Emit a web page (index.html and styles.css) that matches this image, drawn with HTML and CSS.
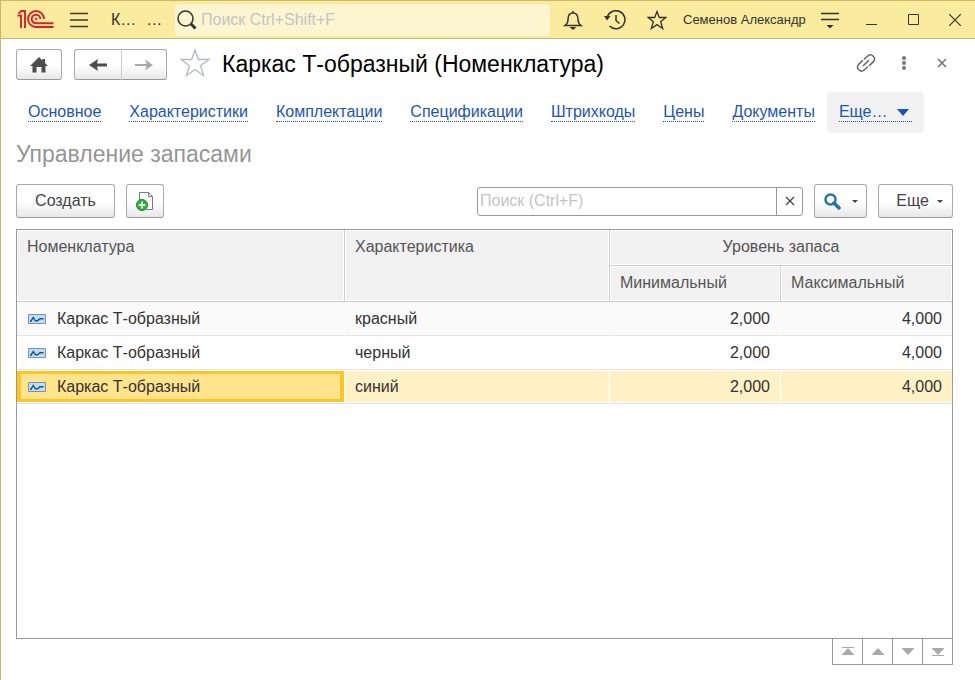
FILE: index.html
```html
<!DOCTYPE html>
<html lang="ru">
<head>
<meta charset="utf-8">
<meta name="viewport" content="width=device-width, initial-scale=1">
<title>Каркас Т-образный (Номенклатура)</title>
<link rel="stylesheet" href="styles.css">
</head>
<body>
<div class="window">
  <header class="titlebar">
    <svg class="logo" width="38" height="20" viewBox="0 0 38 20" fill="none" stroke="#d9202a" stroke-width="1.900" aria-hidden="true">
      <path d="M.5 5.500H4V18M1.500 3.500L4.500 1H8v17"/>
      <path d="M27 9a8 8 0 1 0-8 8h17.500"/>
      <path d="M23.300 9A4.300 4.300 0 1 0 19 13.300h17.500"/>
      <circle cx="19" cy="9" r="1" stroke-width="1"/>
    </svg>
    <button class="tool menu-btn" aria-label="Главное меню">
      <svg width="20" height="18" viewBox="0 0 20 18" fill="none" stroke="#3d3a2b" stroke-width="1.500"><path d="M1 2.500h18M1 9h18M1 15.500h18"/></svg>
    </button>
    <span class="app-name"><span>К…</span><span>…</span></span>
    <label class="global-search">
      <svg width="20" height="20" viewBox="0 0 20 20" fill="none" stroke="#333"><circle cx="8.500" cy="8.500" r="7.500" stroke-width="1.500"/><path d="M14 14l4.500 4.500" stroke-width="3"/></svg>
      <input type="text" placeholder="Поиск Ctrl+Shift+F" aria-label="Поиск">
    </label>
    <button class="tool" aria-label="Уведомления">
      <svg width="20" height="20" viewBox="0 0 20 20" fill="none" stroke="#333" stroke-width="1.500"><path d="M2 15.500c2-1.500 3-3 3-6 0-4 1.500-6.500 5-6.500s5 2.500 5 6.500c0 3 1 4.500 3 6zM10 3V1"/><path d="M6.500 17h7L10 20z" fill="#333" stroke="none"/></svg>
    </button>
    <button class="tool" aria-label="История">
      <svg width="22" height="20" viewBox="0 0 22 20" fill="none" stroke="#333" stroke-width="1.500"><path d="M3 8.500A9 9 0 1 1 5.500 16M12 5v5.500l3.500 3"/><path d="M0 6h6.500L3 10.500z" fill="#333" stroke="none"/></svg>
    </button>
    <button class="tool" aria-label="Избранное">
      <svg width="20" height="20" viewBox="0 0 20 20" fill="none" stroke="#333" stroke-width="1.300"><path d="M10 1.500l2.300 6h6.400l-5 4.200 2 6.800L10 14.600l-5.700 3.900 2-6.800-5-4.200h6.400z"/></svg>
    </button>
    <span class="user">Семенов Александр</span>
    <button class="tool" aria-label="Настройки">
      <svg width="20" height="18" viewBox="0 0 20 18" fill="none" stroke="#333" stroke-width="1.500"><path d="M1 2.500h18M1 8.500h18"/><path d="M6.500 14h7L10 17.500z" fill="#333" stroke="none"/></svg>
    </button>
    <button class="tool" aria-label="Свернуть">
      <svg width="12" height="12" viewBox="0 0 12 12" fill="none" stroke="#333"><path d="M0 10.500h11"/></svg>
    </button>
    <button class="tool" aria-label="Развернуть">
      <svg width="12" height="12" viewBox="0 0 12 12" fill="none" stroke="#333"><path d="M.5.5h10v10H.5z"/></svg>
    </button>
    <button class="tool close-window" aria-label="Закрыть">
      <svg width="12" height="12" viewBox="0 0 12 12" fill="none" stroke="#333" stroke-width="1.200"><path d="M0 0l12 12M12 0L0 12"/></svg>
    </button>
  </header>

  <main class="page">
    <div class="form-head">
      <button class="btn home" aria-label="Начальная страница">
        <svg width="18" height="16" viewBox="0 0 18 16" fill="#4d4d4d"><path d="M9 0l3.500 3.500V2H15v4l3 3h-2.500v6.500h-4V10h-5v5.500h-4V9H0z"/></svg>
      </button>
      <div class="history">
        <button class="btn" aria-label="Назад">
          <svg width="18" height="14" viewBox="0 0 18 14"><path d="M18 5.500v3H8L9 13 0 7l9-6-1 4.500z" fill="#4d4d4d"/></svg>
        </button>
        <button class="btn" aria-label="Вперед">
          <svg width="18" height="14" viewBox="0 0 18 14"><path d="M0 6v2h11.500L10 12.500 18 7l-8-5.500L11.500 6z" fill="#aaa"/></svg>
        </button>
      </div>
      <button class="plain favorite" aria-label="В избранное">
        <svg width="30" height="28" viewBox="0 0 30 28" fill="none" stroke="#b4bac0" stroke-width="1.300"><path d="M15 1l3.400 9.500H29l-8.500 6.200L23.500 26.500 15 20.500 6.500 26.500l3-9.800L1 10.500h10.600z"/></svg>
      </button>
      <h1>Каркас Т-образный (Номенклатура)</h1>
      <button class="plain link-btn" aria-label="Ссылка">
        <svg width="20" height="20" viewBox="-1 -1 20 20" fill="none" stroke="#666" stroke-width="1.500" stroke-linecap="round"><path d="M7.500 5L11 1.800a4 4 0 0 1 5.600 5.600L12.500 11.500M10.500 13L7 16.200a4 4 0 0 1-5.600-5.600L5.500 6.500M6.500 11.500l5-5"/></svg>
      </button>
      <button class="plain" aria-label="Действия">
        <svg width="6" height="14" viewBox="0 0 6 14" fill="#777"><circle cx="3" cy="2" r="2"/><circle cx="3" cy="7" r="2"/><circle cx="3" cy="12" r="2"/></svg>
      </button>
      <button class="plain" aria-label="Закрыть форму">
        <svg width="10" height="10" viewBox="0 0 10 10" fill="none" stroke="#707070" stroke-width="1.500"><path d="M1 1l8 8M9 1L1 9"/></svg>
      </button>
    </div>

    <nav class="links">
      <a href="#">Основное</a>
      <a href="#">Характеристики</a>
      <a href="#">Комплектации</a>
      <a href="#">Спецификации</a>
      <a href="#">Штрихкоды</a>
      <a href="#">Цены</a>
      <a href="#">Документы</a>
      <span class="more-tab"><a href="#">Еще…<svg width="12" height="7" viewBox="0 0 12 7"><path d="M0 0h12L6 7z" fill="#1556b0"/></svg></a></span>
    </nav>

    <h2>Управление запасами</h2>

    <div class="toolbar">
      <button class="btn create">Создать</button>
      <button class="btn copy" aria-label="Создать копированием">
        <svg width="18" height="20" viewBox="0 0 18 20" fill="none"><path d="M3.500 10V1.500h9l4 4v13H10" fill="#fff" stroke="#717b8c"/><path d="M12.500 1.500v4h4" stroke="#717b8c"/><circle cx="6" cy="14" r="5.500" fill="#35ae46" stroke="#188428"/><path d="M6 10.500v7M2.500 14h7" stroke="#fff" stroke-width="1.500"/></svg>
      </button>
      <div class="list-search">
        <input type="text" placeholder="Поиск (Ctrl+F)" aria-label="Поиск в списке">
        <button aria-label="Очистить">
          <svg width="10" height="10" viewBox="0 0 10 10" fill="none" stroke="#444" stroke-width="1.300"><path d="M1 1l8 8M9 1L1 9"/></svg>
        </button>
      </div>
      <button class="btn find" aria-label="Найти">
        <svg width="17" height="17" viewBox="0 0 17 17" fill="none" stroke="#2873a6"><circle cx="6.500" cy="6.500" r="5" stroke-width="2.500"/><path d="M10 10l5 5" stroke-width="3.500" stroke-linecap="round"/></svg>
        <svg width="6" height="3" viewBox="0 0 6 3"><path d="M0 0h6L3 3z" fill="#444"/></svg>
      </button>
      <button class="btn more">Еще
        <svg width="6" height="3" viewBox="0 0 6 3"><path d="M0 0h6L3 3z" fill="#444"/></svg>
      </button>
    </div>

    <div class="list">
      <table>
        <colgroup><col><col class="col-feature"><col class="col-level"><col class="col-level"></colgroup>
        <thead>
          <tr><th rowspan="2">Номенклатура</th><th rowspan="2">Характеристика</th><th colspan="2" class="group">Уровень запаса</th></tr>
          <tr><th>Минимальный</th><th>Максимальный</th></tr>
        </thead>
        <tbody>
          <tr class="odd">
            <td><span class="item"><svg width="18" height="10" viewBox="0 0 18 10" fill="none"><path d="M.5.5h17v9H.5z" fill="#bfdcf3" stroke="#7d93a8"/><path d="M2 7.200h1L5.200 3.500l2.300 3.300h2L12 4.700h3.500" stroke="#17548f" stroke-width="1.400"/></svg>Каркас Т-образный</span></td>
            <td>красный</td><td class="num">2,000</td><td class="num">4,000</td>
          </tr>
          <tr>
            <td><span class="item"><svg width="18" height="10" viewBox="0 0 18 10" fill="none"><path d="M.5.5h17v9H.5z" fill="#bfdcf3" stroke="#7d93a8"/><path d="M2 7.200h1L5.200 3.500l2.300 3.300h2L12 4.700h3.500" stroke="#17548f" stroke-width="1.400"/></svg>Каркас Т-образный</span></td>
            <td>черный</td><td class="num">2,000</td><td class="num">4,000</td>
          </tr>
          <tr class="selected">
            <td class="current"><span class="item"><svg width="18" height="10" viewBox="0 0 18 10" fill="none"><path d="M.5.5h17v9H.5z" fill="#bfdcf3" stroke="#7d93a8"/><path d="M2 7.200h1L5.200 3.500l2.300 3.300h2L12 4.700h3.500" stroke="#17548f" stroke-width="1.400"/></svg>Каркас Т-образный</span></td>
            <td>синий</td><td class="num">2,000</td><td class="num">4,000</td>
          </tr>
        </tbody>
      </table>
    </div>

    <div class="pager">
      <button aria-label="В начало"><svg width="14" height="10" viewBox="0 0 14 10" fill="#aaa"><path d="M1 0h12v1H1zM7 1l6.500 7H.5z"/></svg></button>
      <button aria-label="Вверх"><svg width="14" height="10" viewBox="0 0 14 10" fill="#aaa"><path d="M7 1l6.500 7H.5z"/></svg></button>
      <button aria-label="Вниз"><svg width="14" height="10" viewBox="0 0 14 10" fill="#aaa"><path d="M7 8L.5 1h13z"/></svg></button>
      <button aria-label="В конец"><svg width="14" height="10" viewBox="0 0 14 10" fill="#aaa"><path d="M7 8L.5 1h13zM1 8h12v1H1z"/></svg></button>
    </div>
  </main>
</div>
</body>
</html>
```
FILE: styles.css
```css
* { box-sizing: border-box; }

body {
  margin: 0;
  font: 16px/20px "Liberation Sans", Arial, sans-serif;
  color: #333;
  background: #fff;
}

button, input { font: inherit; color: inherit; }
button { padding: 0; border: 0; background: none; }
svg { display: block; flex: none; }

.window {
  display: flex;
  flex-direction: column;
  min-height: 100vh;
  border: solid #c9b96a;
  border-width: 1px 0 0 1px;
}

/* Title bar */
.titlebar {
  display: flex;
  align-items: center;
  height: 38px;
  padding-left: 16px;
  background: #faeb9e;
  border-bottom: 1px solid #c9b96a;
}

.tool {
  display: flex;
  flex: none;
  align-items: center;
  justify-content: center;
  width: 42px;
  height: 36px;
}

.tool.menu-btn { width: 20px; margin-left: 14px; }
.tool.close-window { width: 40px; }

.app-name {
  display: flex;
  gap: 10px;
  width: 64px;
  margin-left: 22px;
}

.global-search {
  display: flex;
  flex: 1;
  align-items: center;
  gap: 4px;
  min-width: 0;
  height: 32px;
  margin-right: 2px;
  padding-left: 2px;
  background: #fdf5d0;
  border-radius: 3px;
}

input {
  flex: 1;
  min-width: 0;
  padding: 0;
  border: 0;
  outline: 0;
  background: none;
}

input::placeholder { color: #c4c4c4; opacity: 1; }

.user {
  width: 131px;
  padding-left: 5px;
  font-size: 13px;
  white-space: nowrap;
}

/* Form header */
.page {
  display: flex;
  flex: 1;
  flex-direction: column;
  padding: 10px 22px 15px 15px;
}

.form-head { display: flex; align-items: center; height: 31px; }

.btn {
  display: flex;
  align-items: center;
  justify-content: center;
  height: 34px;
  color: #444;
  background: linear-gradient(#fff 50%, #e8e8e8);
  border: 1px solid #aaa;
  border-bottom-color: #999;
  border-radius: 3px;
}

.form-head .btn { height: 31px; }
.home { width: 46px; margin-right: 12px; }
.history { display: flex; }
.history .btn { width: 48px; border-right-color: #ccc; border-radius: 3px 0 0 3px; }
.history .btn + .btn { width: 45px; border-right-color: #aaa; border-left: 0; border-radius: 0 3px 3px 0; }

.plain {
  display: flex;
  flex: none;
  align-items: center;
  justify-content: center;
  width: 38px;
  height: 30px;
  padding-bottom: 3px;
}

.plain:last-child { margin-right: -8px; }
.plain.favorite { width: 30px; margin: 0 12px 0 13px; }

h1, h2 { margin: 0; font-weight: normal; }
h1 { flex: 1; padding-bottom: 2px; color: #000; font-size: 23px; line-height: 28px; }

/* Section links */
.links {
  display: flex;
  align-items: center;
  gap: 28px;
  height: 41px;
  margin-top: 12px;
  padding-left: 12px;
  white-space: nowrap;
}

.links a {
  display: flex;
  align-items: center;
  height: 18px;
  color: #1d55b5;
  text-decoration: none;
  border-bottom: 1px dotted #1d55b5;
}

.more-tab {
  display: flex;
  align-items: center;
  height: 41px;
  margin-left: -16px;
  padding: 0 12px;
  background: #f1f1f1;
  border-radius: 4px;
}

.more-tab a { gap: 10px; padding-right: 3px; }

h2 { margin-top: 7px; color: #959595; font-size: 23px; line-height: 28px; }

/* Command bar */
.toolbar { display: flex; align-items: center; gap: 11px; margin-top: 16px; }
.create { width: 99px; }
.copy { width: 38px; }

.list-search {
  display: flex;
  width: 326px;
  height: 29px;
  margin-left: auto;
  border: 1px solid #999;
  border-radius: 3px;
}

.list-search input { padding-left: 2px; }

.list-search button {
  display: flex;
  align-items: center;
  justify-content: center;
  width: 26px;
  border-left: 1px solid #999;
}

.find { gap: 11px; width: 53px; }
.more { gap: 8px; width: 75px; padding-left: 8px; }

/* List */
.list {
  flex: 1;
  margin-top: 11px;
  border: 1px solid #999;
}

table {
  width: 100%;
  table-layout: fixed;
  border-spacing: 0;
}

.col-feature { width: 265px; }
.col-level { width: 171px; }

th, td { padding: 0 10px; text-align: left; font-weight: normal; }

th {
  height: 36px;
  padding-top: 7px;
  color: #555;
  vertical-align: top;
  background: #f1f1f1;
  border: solid #ccc;
  border-width: 0 1px 1px 0;
  box-shadow: inset 0 0 0 1px #fff;
}

th.group { text-align: center; }
th.group, thead tr + tr th:last-child { border-right: 0; }

td {
  height: 34px;
  border-right: 1px solid transparent;
  border-bottom: 1px solid #e4e4e4;
}

td:last-child { border-right: 0; }

.num { text-align: right; }
.odd td { background: #fafafa; }

.selected td {
  background: #fef1c5;
  border-right-color: #fff;
  box-shadow: inset 0 1px #fff, inset 0 -1px #fff;
}

.selected .current {
  background: #ffe48d;
  box-shadow: inset 0 1px #fff, inset 0 -1px #fff, inset 0 0 0 4px #f9c623;
}

.item { display: flex; align-items: center; gap: 11px; padding-left: 1px; }

/* List navigation */
.pager {
  display: flex;
  align-self: flex-end;
  border: solid #999;
  border-width: 0 1px 1px 0;
}

.pager button {
  display: flex;
  align-items: center;
  justify-content: center;
  width: 30px;
  height: 25px;
  border-left: 1px solid #999;
}
```
